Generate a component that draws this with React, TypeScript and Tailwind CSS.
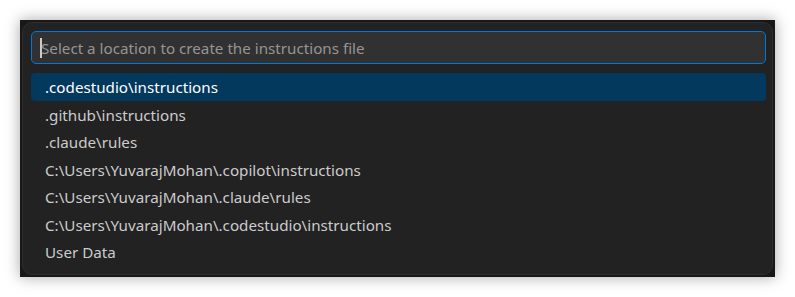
import React from "react";

const items = [
  ".codestudio\\instructions",
  ".github\\instructions",
  ".claude\\rules",
  "C:\\Users\\YuvarajMohan\\.copilot\\instructions",
  "C:\\Users\\YuvarajMohan\\.claude\\rules",
  "C:\\Users\\YuvarajMohan\\.codestudio\\instructions",
  "User Data",
];

export default function App() {
  return (
    <div className="w-[795px] h-[297px] bg-white p-[20px]" style={{ fontFamily: '"Noto Sans", "Open Sans", sans-serif' }}>
      <div className="w-[755px] h-[257px] bg-[#181818] p-[2px] shadow-[0_0_14px_rgba(0,0,0,0.35)]">
        <div className="h-[253px] rounded-[10px] border border-[#2e2e2e] bg-[#222222] pl-[8px] pr-[6px] pt-[8px]">
          <div className="relative flex h-[33px] items-center rounded-[5px] border border-[#0078d4] bg-[#313131] pl-[9px] pt-[2px]">
            <div className="absolute left-[8px] top-[6px] h-[20px] w-[1.5px] bg-[#cccccc]" />
            <span className="text-[15.2px] text-[#959595]">Select a location to create the instructions file</span>
          </div>
          <div className="mt-[9px] flex flex-col">
            {items.map((t, i) => (
              <div
                key={t}
                className={
                  i === 0
                    ? "flex h-[28px] items-center rounded-[4px] bg-[#04395e] pl-[14px] pt-[1px] text-[15.2px] text-[#ffffff]"
                    : "flex h-[27.5px] items-center pl-[14px] pt-[1px] text-[15.2px] text-[#cccccc]"
                }
              >
                {t}
              </div>
            ))}
          </div>
        </div>
      </div>
    </div>
  );
}
